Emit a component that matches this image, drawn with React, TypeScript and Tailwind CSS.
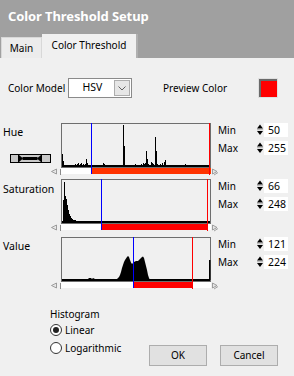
import React from "react";

type Pt = [number, number];

const hueBars: Pt[] = [
  [62, 154], [63, 161], [75, 164], [77, 164], [78, 163], [80, 164], [81, 163], [83, 164], [85, 164],
  [86, 159], [87, 163], [103, 163], [104, 164], [123, 125], [124, 146], [135, 164], [141, 164],
  [143, 163], [144, 164], [145, 163], [146, 151], [147, 159], [148, 164], [151, 162], [152, 163],
  [153, 164], [155, 137], [156, 151], [157, 164], [160, 164], [162, 163], [164, 162], [165, 160], [185, 164],
];

const satBars: Pt[] = [
  [63, 200], [64, 182], [65, 196], [66, 199], [67, 205], [68, 210], [69, 214], [70, 216], [71, 218],
  [72, 219], [73, 220], [74, 220], [75, 220], [77, 221], [79, 221], [81, 221], [82, 221],
];

const valuePoly: Pt[] = [
  [88, 279], [89, 278], [91, 278], [92, 279], [93, 278], [95, 279], [96, 280], [115, 280], [117, 279],
  [119, 277], [120, 275], [121, 272], [122, 268], [123, 265], [124, 262], [125, 260], [126, 258.5],
  [127, 257], [128, 256], [129, 257], [130, 260], [131, 262.5], [132, 264], [133, 263], [134, 262],
  [136, 261], [138, 261], [140, 259], [141, 258], [142, 257], [143, 256.5], [144, 258], [145, 262],
  [146, 266], [147, 270], [148, 275], [149, 278], [150, 280], [159, 280], [160, 279], [161, 280],
  [165, 280], [166, 279], [167, 280], [178, 280], [179, 279], [180, 280], [208, 280],
];

function Hist({
  top,
  bars = [],
  poly,
  spike,
  minX,
  maxX,
  redEnd,
  barColor,
}: {
  top: number;
  bars?: Pt[];
  poly?: Pt[];
  spike?: Pt;
  minX: number;
  maxX: number;
  redEnd: number;
  barColor: string;
}) {
  const L = (X: number) => X - 50;
  const T = (Y: number) => Y - top;
  const base = 43;
  return (
    <svg width={168} height={54} viewBox="0 0 168 54" className="block shrink-0">
      <rect x={11.5} y={0.5} width={149} height={44} fill="none" stroke="#6e6e6e" />
      {bars.map(([X, Y], i) => (
        <rect key={i} x={L(X)} y={T(Y)} width={1} height={base - T(Y)} fill="#000" />
      ))}
      {poly && (
        <polygon
          fill="#000"
          points={
            `${L(poly[0][0])},${base} ` +
            poly.map(([X, Y]) => `${L(X)},${T(Y)}`).join(" ") +
            ` ${L(poly[poly.length - 1][0])},${base}`
          }
        />
      )}
      {spike && <rect x={L(spike[0])} y={T(spike[1])} width={1.5} height={base - T(spike[1])} fill="#000" />}
      <rect x={12} y={42} width={148} height={2} fill="#000" />
      <rect x={11} y={45} width={150} height={6} fill="#fff" />
      <rect x={L(minX)} y={45} width={L(redEnd) - L(minX)} height={6} fill={barColor} />
      <line x1={L(minX) + 0.5} y1={0} x2={L(minX) + 0.5} y2={51} stroke="#0000ff" strokeWidth={1} />
      <line x1={L(maxX) + 0.5} y1={0} x2={L(maxX) + 0.5} y2={52} stroke="#ff0000" strokeWidth={1} />
      <polygon points="1.5,48.5 6.5,46 6.5,51" fill="#e6e6e6" stroke="#8a8a8a" strokeWidth={0.8} />
      <line x1={10.5} y1={46} x2={10.5} y2={52} stroke="#8a8a8a" />
      <polygon points="162.5,46 162.5,51 167,48.5" fill="#e6e6e6" stroke="#8a8a8a" strokeWidth={0.8} />
      <line x1={164} y1={52} x2={168} y2={49.5} stroke="#8a8a8a" strokeWidth={0.8} />
    </svg>
  );
}

function Spinner() {
  return (
    <svg width={6} height={12} viewBox="0 0 6 12" className="block shrink-0">
      <polygon points="0,4.5 3,0.5 6,4.5" fill="#000" />
      <line x1={0} y1={5.75} x2={6} y2={5.75} stroke="#9a9a9a" strokeWidth={0.8} />
      <polygon points="0,7 6,7 3,11" fill="#000" />
    </svg>
  );
}

function MinMax({ min, max }: { min: string; max: string }) {
  const Row = ({ label, value }: { label: string; value: string }) => (
    <div className="flex h-[14px] items-center">
      <div className="w-[39px] leading-[14px]">{label}</div>
      <Spinner />
      <div className="ml-[1px] flex h-[14px] w-[24px] items-center bg-white pl-[4px] text-[10.5px] leading-[14px]">{value}</div>
    </div>
  );
  return (
    <div className="flex flex-col gap-[4px]">
      <Row label="Min" value={min} />
      <Row label="Max" value={max} />
    </div>
  );
}

function SliderWidget() {
  return (
    <svg width={41} height={9} viewBox="0 0 41 9" className="block">
      <rect x={0.5} y={0.5} width={40} height={8} fill="#c8c8c8" stroke="#000" />
      <line x1={8.5} y1={0} x2={8.5} y2={9} stroke="#000" />
      <line x1={31.5} y1={0} x2={31.5} y2={9} stroke="#000" />
      <polygon points="9,1 13,4.5 9,8" fill="#000" />
      <rect x={12.5} y={3} width={15} height={3} fill="#000" />
      <polygon points="31,1 27,4.5 31,8" fill="#000" />
    </svg>
  );
}

export default function App() {
  return (
    <div className="flex h-[376px] w-[294px] flex-col overflow-hidden bg-[#f0f0f0] font-['Noto_Sans',sans-serif] text-[10px] text-black">
      <div className="flex h-[58px] shrink-0 flex-col bg-[#a0a0a0]">
        <div className="flex h-[34px] items-center pl-[8px] text-[13px] font-bold tracking-[-0.1px] text-white">
          Color Threshold Setup
        </div>
        <div className="flex h-[24px] items-end pl-[1px]">
          <div className="flex h-[21px] w-[41px] items-center justify-center border border-b-0 border-[#d8d8d8] bg-[#ececec] pt-[1px]">
            Main
          </div>
          <div className="flex h-[24px] w-[96px] items-center justify-center border-r-2 border-[#b0b0b0] bg-[#f0f0f0] pb-[1px]">
            Color Threshold
          </div>
        </div>
      </div>

      <div className="mt-[20px] flex h-[20px] items-center">
        <div className="w-[68px] pl-[8px]">Color Model</div>
        <div className="flex h-[20px] w-[64px] items-center border border-[#8a8a8a] bg-white">
          <div className="flex-1 pl-[2px] text-center text-[10.5px]">HSV</div>
          <div className="mr-[1px] flex h-[16px] w-[16px] items-center justify-center border border-[#adadad] bg-[#e6e6e6]">
            <svg width={8} height={5} viewBox="0 0 8 5">
              <polyline points="0.5,0.5 4,4 7.5,0.5" fill="none" stroke="#606060" strokeWidth={1} />
            </svg>
          </div>
        </div>
        <div className="ml-[31px] w-[95px]">Preview Color</div>
        <div className="h-[20px] w-[20px] border border-[#e0e0e0] bg-[#f6f6f6]">
          <div className="h-full w-full border-l-2 border-t-2 border-l-[#6a6a6a] border-t-[#6a6a6a] bg-[#ff0000]" />
        </div>
      </div>

      <div className="mt-[25px] flex flex-col">
        <div className="flex h-[56px]">
          <div className="flex w-[50px] flex-col">
            <div className="pl-[3px] pt-[2px] text-[10.5px] leading-[14px]">Hue</div>
            <div className="ml-[10px] mt-[15px]">
              <SliderWidget />
            </div>
          </div>
          <Hist top={123} bars={hueBars} minX={91} maxX={209} redEnd={211} barColor="#ff3300" />
          <MinMax min="50" max="255" />
        </div>
        <div className="flex h-[58px]">
          <div className="w-[50px] pl-[3px] pt-[3px] text-[10.5px] leading-[14px]">Saturation</div>
          <Hist top={179} bars={satBars} minX={101} maxX={207} redEnd={207} barColor="#ff0000" />
          <MinMax min="66" max="248" />
        </div>
        <div className="flex h-[54px]">
          <div className="w-[50px] pl-[3px] pt-[2px] text-[10.5px] leading-[14px]">Value</div>
          <Hist top={237} poly={valuePoly} spike={[209, 260]} minX={133} maxX={192} redEnd={193} barColor="#ff0000" />
          <MinMax min="121" max="224" />
        </div>
      </div>

      <div className="flex">
        <div className="mt-[16px] flex w-[149px] flex-col pl-[50px]">
          <div className="h-[14px] leading-[14px]">Histogram</div>
          <div className="flex h-[18px] items-center">
            <div className="flex h-[12px] w-[12px] items-center justify-center rounded-full border border-[#333] bg-white">
              <div className="h-[6px] w-[6px] rounded-full bg-[#222]" />
            </div>
            <span className="ml-[3px]">Linear</span>
          </div>
          <div className="flex h-[18px] items-center">
            <div className="h-[12px] w-[12px] rounded-full border border-[#333] bg-white" />
            <span className="ml-[3px]">Logarithmic</span>
          </div>
        </div>
        <div className="mt-[54px] flex h-[21px] w-[58px] items-center justify-center border border-[#adadad] bg-[#e1e1e1]">
          OK
        </div>
        <div className="ml-[13px] mt-[54px] flex h-[21px] w-[58px] items-center justify-center border border-[#adadad] bg-[#e1e1e1]">
          Cancel
        </div>
      </div>
    </div>
  );
}
